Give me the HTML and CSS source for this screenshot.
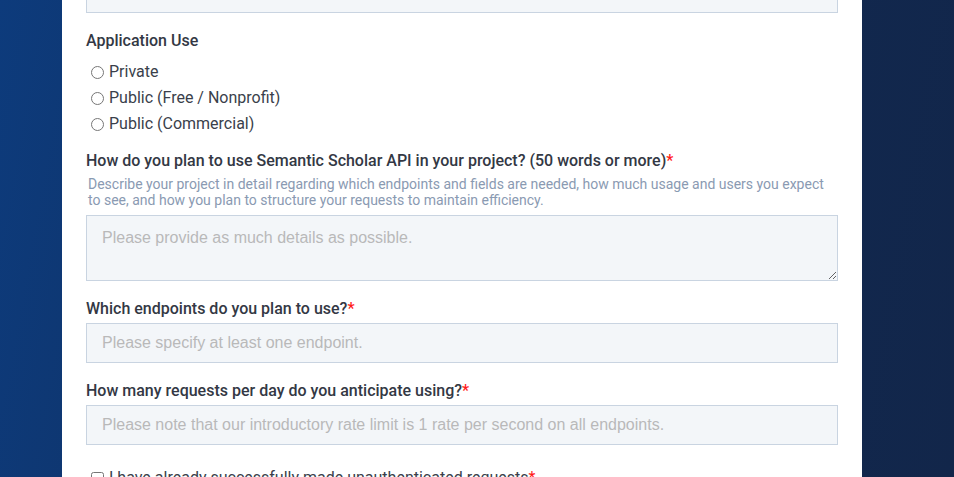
FILE: index.html
```html
<!DOCTYPE html>
<html lang="en">
<head>
<meta charset="utf-8">
<title>API Key Request</title>
<link rel="stylesheet" href="styles.css">
</head>
<body>
<div class="page">
  <form class="card">
    <div class="field field-top">
      <input class="text-input" type="text">
    </div>

    <div class="field field-radio">
      <div class="label">Application Use</div>
      <div class="radios">
        <label class="radio-row"><input type="radio" name="use"><span>Private</span></label>
        <label class="radio-row"><input type="radio" name="use"><span>Public (Free / Nonprofit)</span></label>
        <label class="radio-row"><input type="radio" name="use"><span>Public (Commercial)</span></label>
      </div>
    </div>

    <div class="field field-q">
      <div class="label">How do you plan to use Semantic Scholar API in your project? (50 words or more)<span class="req">*</span></div>
      <div class="desc">Describe your project in detail regarding which endpoints and fields are needed, how much usage and users you expect to see, and how you plan to structure your requests to maintain efficiency.</div>
      <textarea class="text-area" placeholder="Please provide as much details as possible."></textarea>
    </div>

    <div class="field">
      <div class="label">Which endpoints do you plan to use?<span class="req">*</span></div>
      <input class="text-input" type="text" placeholder="Please specify at least one endpoint.">
    </div>

    <div class="field">
      <div class="label">How many requests per day do you anticipate using?<span class="req">*</span></div>
      <input class="text-input" type="text" placeholder="Please note that our introductory rate limit is 1 rate per second on all endpoints.">
    </div>

    <div class="field field-check">
      <label class="check-row"><input type="checkbox"><span>I have already successfully made unauthenticated requests<span class="req">*</span></span></label>
    </div>
  </form>
</div>
</body>
</html>
```

FILE: styles.css
```css
html, body {
  margin: 0;
  padding: 0;
  height: 100%;
  overflow: hidden;
}

body {
  background: linear-gradient(100deg, #0d3b7c 0%, #103163 35%, #11284f 75%, #12264a 100%);
  font-family: Roboto, "Liberation Sans", Arial, sans-serif;
  color: #333844;
}

.page {
  padding-left: 62px;
}

.card {
  width: 752px;
  background: #ffffff;
  padding: 0 24px 40px;
  margin-top: -27px;
  display: flex;
  flex-direction: column;
}

.field {
  display: flex;
  flex-direction: column;
  margin-top: 16px;
}

.field-top {
  margin-top: 0;
}

.field-radio {
  margin-top: 16px;
}

.field-q {
  margin-top: 12px;
}

.label {
  font-size: 16px;
  font-weight: 500;
  line-height: 24px;
  color: #333844;
  margin-bottom: 2px;
}

.req {
  color: #ff1a1a;
}

.radios {
  display: flex;
  flex-direction: column;
  margin-top: 4px;
}

.radio-row {
  display: flex;
  align-items: center;
  height: 26px;
  font-size: 16px;
  line-height: 26px;
  color: #3a3f4b;
}

.radio-row input {
  width: 13px;
  height: 13px;
  margin: 0 5px 0 5px;
}

.desc {
  font-size: 14px;
  line-height: 16px;
  color: #8a9ab2;
  padding-left: 2px;
  margin-top: 1px;
  margin-bottom: 7px;
}

.text-input,
.text-area {
  box-sizing: border-box;
  width: 752px;
  margin: 0;
  border: 1px solid #c9d4e1;
  border-radius: 0;
  background: #f3f6f9;
  font-family: "Liberation Sans", Arial, sans-serif;
  font-size: 16px;
  color: #333;
  outline: none;
}

.text-input {
  height: 40px;
  padding: 0 15px;
}

.text-area {
  height: 66px;
  padding: 12px 15px;
  line-height: 20px;
  resize: vertical;
  display: block;
}

.text-input::placeholder,
.text-area::placeholder {
  color: #b9b9b9;
}

.field-check {
  margin-top: 21px;
}

.check-row {
  display: flex;
  align-items: center;
  font-size: 16px;
  line-height: 24px;
  color: #3a3f4b;
}

.check-row input {
  width: 13px;
  height: 13px;
  margin: 0 5px 0 5px;
}
```
